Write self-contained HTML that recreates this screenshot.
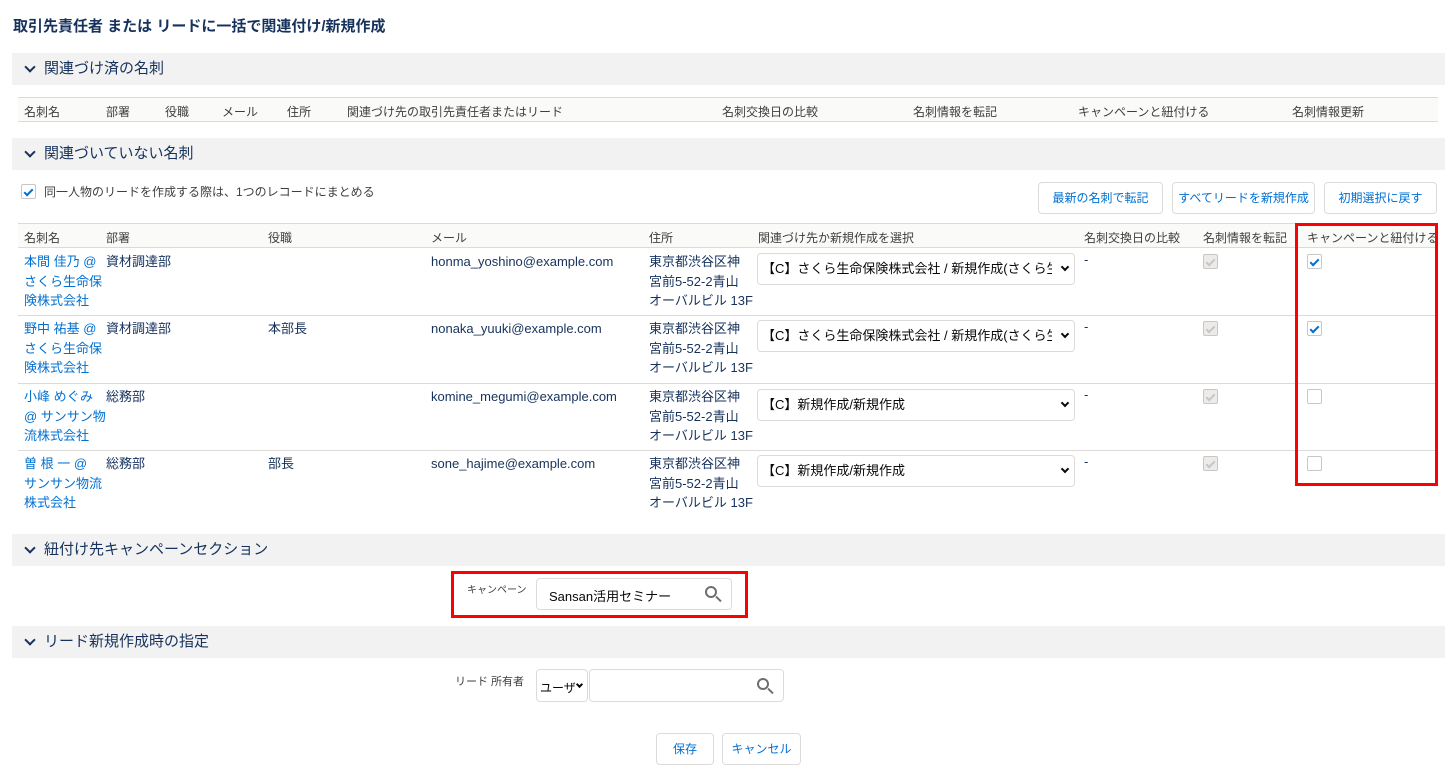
<!DOCTYPE html>
<html><head><meta charset="utf-8"><style>
*{box-sizing:border-box;margin:0;padding:0}
body{width:1455px;height:771px;background:#fff;font-family:"Liberation Sans","Noto Sans CJK JP",sans-serif;color:#16325c;font-size:13px;position:relative;overflow:hidden}
.a{position:absolute;white-space:nowrap}
.bar{position:absolute;left:12px;width:1433px;height:32px;background:#f3f2f2;font-size:15px;color:#16325c;line-height:32px;padding-left:32px}
.bar:before{content:"";position:absolute;left:14px;top:10px;width:6px;height:6px;border-right:2px solid #16325c;border-bottom:2px solid #16325c;transform:rotate(45deg)}
.hd{position:absolute;left:18px;width:1420px;height:25px;background:#fafaf9;border-top:1px solid #dddbda;border-bottom:1px solid #dddbda;font-size:12px;color:#3e3e3c}
.hd span{position:absolute;top:5px;white-space:nowrap}
.line{position:absolute;left:18px;width:1420px;height:1px;background:#dddbda}
.cell{position:absolute;line-height:19.5px;font-size:13px;white-space:nowrap}
.lk{color:#0070d2}
.btn{position:absolute;height:32px;border:1px solid #dddbda;border-radius:4px;background:#fff;color:#0070d2;font-size:12px;text-align:center;line-height:30px;white-space:nowrap}
.sel{position:absolute;left:757px;width:318px;height:32px;border:1px solid #dddbda;border-radius:4px;font-size:13px;line-height:30px;padding-left:4px;color:#080707;overflow:hidden;white-space:nowrap}
.sel .t{display:block;width:290px;overflow:hidden}
.chev{position:absolute;width:6px;height:6px;border-right:2px solid #080707;border-bottom:2px solid #080707;transform:rotate(45deg)}
.cb{position:absolute;width:15px;height:15px;border:1px solid #c9c7c5;border-radius:2px;background:#fff}
.cb.dis{background:#ecebea;border-color:#c9c7c5}
.cb.on:after{content:"";position:absolute;left:4px;top:2px;width:3px;height:7px;border-right:2px solid #0070d2;border-bottom:2px solid #0070d2;transform:rotate(45deg)}
.cb.dis:after{content:"";position:absolute;left:4px;top:2px;width:3px;height:7px;border-right:2px solid #c9c7c5;border-bottom:2px solid #c9c7c5;transform:rotate(45deg)}
.inp{position:absolute;border:1px solid #dddbda;border-radius:4px;background:#fff}
.mag{position:absolute;width:12px;height:12px;border:2px solid #706e6b;border-radius:50%}
.mag:after{content:"";position:absolute;left:8px;top:10px;width:7px;height:2px;background:#706e6b;transform:rotate(45deg)}
</style></head><body>
<div class="a" style="left:13px;top:15px;font-size:15px;font-weight:bold;color:#16325c">取引先責任者 または リードに一括で関連付け/新規作成</div>

<div class="bar" style="top:53px">関連づけ済の名刺</div>
<div class="hd" style="top:97px"><span style="left:6px">名刺名</span><span style="left:88px">部署</span><span style="left:147px">役職</span><span style="left:204px">メール</span><span style="left:269px">住所</span><span style="left:329px">関連づけ先の取引先責任者またはリード</span><span style="left:704px">名刺交換日の比較</span><span style="left:895px">名刺情報を転記</span><span style="left:1060px">キャンペーンと紐付ける</span><span style="left:1274px">名刺情報更新</span></div>

<div class="bar" style="top:138px">関連づいていない名刺</div>
<div class="cb on" style="left:21px;top:184px"></div>
<div class="a" style="left:44px;top:183px;font-size:12px;color:#3e3e3c">同一人物のリードを作成する際は、1つのレコードにまとめる</div>
<div class="btn" style="left:1038px;top:182px;width:125px">最新の名刺で転記</div>
<div class="btn" style="left:1172px;top:182px;width:143px">すべてリードを新規作成</div>
<div class="btn" style="left:1324px;top:182px;width:113px">初期選択に戻す</div>

<div class="hd" style="top:223px"><span style="left:6px">名刺名</span><span style="left:88px">部署</span><span style="left:250px">役職</span><span style="left:413px">メール</span><span style="left:631px">住所</span><span style="left:740px">関連づけ先か新規作成を選択</span><span style="left:1066px">名刺交換日の比較</span><span style="left:1185px">名刺情報を転記</span><span style="left:1289px">キャンペーンと紐付ける</span></div>

<div class="cell lk" style="left:24px;top:252px">本間 佳乃 @<br>さくら生命保<br>険株式会社</div>
<div class="cell" style="left:106px;top:252px">資材調達部</div>
<div class="cell" style="left:431px;top:252px">honma_yoshino@example.com</div>
<div class="cell" style="left:649px;top:252px">東京都渋谷区神<br>宮前5-52-2青山<br>オーバルビル 13F</div>
<div class="sel" style="top:253px"><span class="t">【C】さくら生命保険株式会社 / 新規作成(さくら生命保険</span><i class="chev" style="right:6px;top:10px"></i></div>
<div class="cell" style="left:1084px;top:250px">-</div>
<div class="cb dis" style="left:1203px;top:254px"></div>
<div class="cb on" style="left:1307px;top:254px"></div>
<div class="line" style="top:315px"></div>

<div class="cell lk" style="left:24px;top:319px">野中 祐基 @<br>さくら生命保<br>険株式会社</div>
<div class="cell" style="left:106px;top:319px">資材調達部</div>
<div class="cell" style="left:268px;top:319px">本部長</div>
<div class="cell" style="left:431px;top:319px">nonaka_yuuki@example.com</div>
<div class="cell" style="left:649px;top:319px">東京都渋谷区神<br>宮前5-52-2青山<br>オーバルビル 13F</div>
<div class="sel" style="top:320px"><span class="t">【C】さくら生命保険株式会社 / 新規作成(さくら生命保険</span><i class="chev" style="right:6px;top:10px"></i></div>
<div class="cell" style="left:1084px;top:317px">-</div>
<div class="cb dis" style="left:1203px;top:321px"></div>
<div class="cb on" style="left:1307px;top:321px"></div>
<div class="line" style="top:383px"></div>

<div class="cell lk" style="left:24px;top:387px">小峰 めぐみ<br>@ サンサン物<br>流株式会社</div>
<div class="cell" style="left:106px;top:387px">総務部</div>
<div class="cell" style="left:431px;top:387px">komine_megumi@example.com</div>
<div class="cell" style="left:649px;top:387px">東京都渋谷区神<br>宮前5-52-2青山<br>オーバルビル 13F</div>
<div class="sel" style="top:389px"><span class="t">【C】新規作成/新規作成</span><i class="chev" style="right:6px;top:10px"></i></div>
<div class="cell" style="left:1084px;top:385px">-</div>
<div class="cb dis" style="left:1203px;top:389px"></div>
<div class="cb" style="left:1307px;top:389px"></div>
<div class="line" style="top:450px"></div>

<div class="cell lk" style="left:24px;top:454px">曽 根 一 @<br>サンサン物流<br>株式会社</div>
<div class="cell" style="left:106px;top:454px">総務部</div>
<div class="cell" style="left:268px;top:454px">部長</div>
<div class="cell" style="left:431px;top:454px">sone_hajime@example.com</div>
<div class="cell" style="left:649px;top:454px">東京都渋谷区神<br>宮前5-52-2青山<br>オーバルビル 13F</div>
<div class="sel" style="top:455px"><span class="t">【C】新規作成/新規作成</span><i class="chev" style="right:6px;top:10px"></i></div>
<div class="cell" style="left:1084px;top:452px">-</div>
<div class="cb dis" style="left:1203px;top:456px"></div>
<div class="cb" style="left:1307px;top:456px"></div>

<div class="a" style="left:1295px;top:223px;width:143px;height:263px;border:3px solid #f00"></div>

<div class="bar" style="top:534px">紐付け先キャンペーンセクション</div>
<div class="a" style="left:451px;top:571px;width:297px;height:47px;border:3px solid #f00"></div>
<div class="a" style="left:467px;top:581px;font-size:10px;color:#3e3e3c">キャンペーン</div>
<div class="inp" style="left:536px;top:578px;width:196px;height:32px"><span class="a" style="left:12px;top:7px;font-size:13px;color:#080707">Sansan活用セミナー</span><i class="mag" style="left:168px;top:7px"></i></div>

<div class="bar" style="top:626px">リード新規作成時の指定</div>
<div class="a" style="left:455px;top:673px;font-size:11px;color:#3e3e3c">リード 所有者</div>
<div class="inp" style="left:536px;top:669px;width:52px;height:33px"><span class="a" style="left:3px;top:9px;font-size:12px;color:#080707">ユーザ</span><i class="chev" style="left:40px;top:12px;width:5px;height:5px"></i></div>
<div class="inp" style="left:589px;top:669px;width:195px;height:33px"><i class="mag" style="left:167px;top:8px"></i></div>

<div class="btn" style="left:656px;top:733px;width:58px;height:32px">保存</div>
<div class="btn" style="left:722px;top:733px;width:79px;height:32px">キャンセル</div>
</body></html>
